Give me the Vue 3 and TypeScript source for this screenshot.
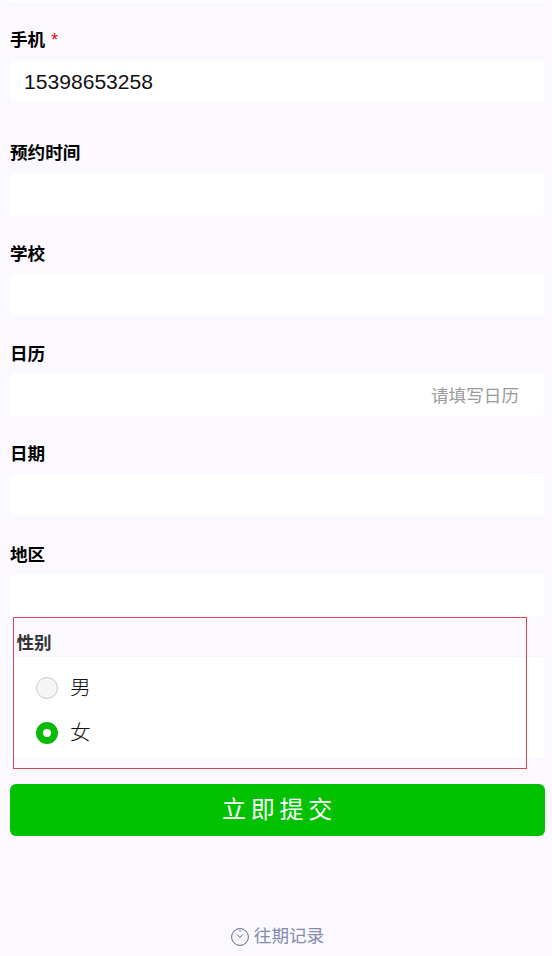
<script setup lang="ts">
interface Field {
  label: string
  value?: string
  placeholder?: string
  required?: boolean
}

const fields: Field[] = [
  { label: '手机', value: '15398653258', required: true },
  { label: '预约时间' },
  { label: '学校' },
  { label: '日历', placeholder: '请填写日历' },
  { label: '日期' },
  { label: '地区' },
]
const options = [
  { label: '男', checked: false },
  { label: '女', checked: true },
]
</script>

<template>
  <main class="page">
    <div class="stub"></div>
    <div v-for="(f, i) in fields" :key="f.label" class="field" :class="{ first: i === 0 }">
      <label class="label">{{ f.label }}<span v-if="f.required" class="req">*</span></label>
      <input class="input" :value="f.value ?? ''" :placeholder="f.placeholder" readonly />
    </div>

    <section class="gender">
      <div class="gender-label">性别</div>
      <div class="card">
        <div v-for="o in options" :key="o.label" class="option">
          <span class="radio" :class="{ on: o.checked }"></span>
          <span class="option-text">{{ o.label }}</span>
        </div>
      </div>
      <div class="selection"></div>
    </section>

    <button class="submit" type="button">立即提交</button>

    <footer class="history">
      <svg class="clock" viewBox="0 0 18 18" width="18" height="18" aria-hidden="true">
        <circle cx="9" cy="9" r="8.4" fill="none" stroke="currentColor" stroke-width="1" />
        <path d="M9 2.4v1.4M6 6.4l3 3.2 2.8-3.2" fill="none" stroke="currentColor" stroke-width="1" />
      </svg>
      <span>往期记录</span>
    </footer>
  </main>
</template>

<style>
html, body { margin: 0; background: #fbf9ff; }
</style>

<style scoped>
.page {
  box-sizing: border-box;
  height: 956px;
  padding: 0 7px 0 10px;
  overflow: hidden;
  display: flex;
  flex-direction: column;
  background: #fbf9ff;
  font-family: "Liberation Sans", "Noto Sans CJK SC", sans-serif;
  color: #000;
}
.stub {
  height: 2px;
  flex: none;
  background: #fff;
  border-radius: 0 0 4px 4px;
}
.field {
  flex: none;
  height: 100.3px;
  display: flex;
  flex-direction: column;
  justify-content: flex-end;
}
.field.first { height: 101px; margin-bottom: 12.5px; }
.label {
  height: 22px;
  margin-bottom: 8.4px;
  font-size: 17.6px;
  line-height: 22px;
  font-weight: 700;
}
.first .label { margin-bottom: 9px; }
.req {
  margin-left: 6px;
  color: #e60012;
  font-weight: 400;
}
.input {
  box-sizing: border-box;
  width: 100%;
  height: 43px;
  padding: 0 25px 0 13px;
  border: 1px solid #fdfcff;
  border-radius: 4px;
  outline: none;
  background: #fff;
  color: #111;
  font: 21.1px "Liberation Sans", "Noto Sans CJK SC", sans-serif;
}
.input::placeholder {
  color: #9a9a9a;
  font-size: 17.6px;
  opacity: 1;
  text-align: right;
}
.gender {
  position: relative;
  flex: none;
  height: 142px;
  display: flex;
  flex-direction: column;
}
.gender-label {
  height: 39px;
  padding: 15px 0 0 6.5px;
  box-sizing: border-box;
  font-size: 17.6px;
  line-height: 22px;
  font-weight: 700;
  color: #333;
}
.card {
  box-sizing: border-box;
  height: 103px;
  padding: 9px 0 3px 25px;
  border: 1px solid #f8f6fd;
  border-radius: 4px;
  background: #fff;
}
.option {
  height: 45px;
  display: flex;
  align-items: center;
  gap: 12px;
}
.radio {
  box-sizing: border-box;
  width: 22px;
  height: 22px;
  border: 1px solid #c8c8c8;
  border-radius: 50%;
  background: #f5f5f5;
}
.radio.on {
  border: 7px solid #09bb07;
  background: #fff;
}
.option-text {
  font-size: 20.8px;
  font-weight: 300;
  line-height: 1;
  color: #111;
}
.selection {
  position: absolute;
  left: 3px;
  top: 0;
  width: 514px;
  height: 152px;
  box-sizing: border-box;
  border: 1px solid #d5484f;
  pointer-events: none;
}
.submit {
  flex: none;
  height: 52px;
  margin-top: 25px;
  padding: 0 0 4px 4px;
  border: 0;
  border-radius: 6px;
  background: #02c100;
  color: #fff;
  font: 400 24px "Liberation Sans", "Noto Sans CJK SC", sans-serif;
  letter-spacing: 4.8px;
}
.history {
  margin-top: 88px;
  display: flex;
  align-items: center;
  justify-content: center;
  gap: 5px;
  height: 24px;
  color: #858aac;
  font-size: 17.6px;
  line-height: 24px;
}
.clock { color: #5c628a; margin-top: 2px; }
</style>
